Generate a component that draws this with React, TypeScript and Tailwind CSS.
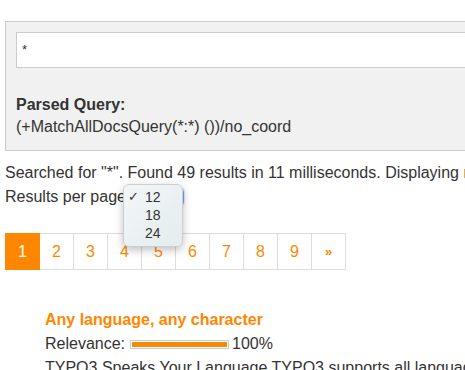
import React from 'react';

const pages = ['1', '2', '3', '4', '5', '6', '7', '8', '9', '»'];

export default function App() {
  return (
    <div className="w-[465px] h-[370px] overflow-hidden bg-white text-[#333] text-[16px] font-['Helvetica_Neue','Liberation_Sans',Arial,sans-serif]">
      <div className="pl-[5px] pt-[21px]">
        {/* search panel */}
        <div className="w-[700px] h-[130px] border border-[#ccc] bg-[#f1f1f1] pl-[10px] pt-[10px]">
          <div className="h-[36px] border border-[#ccc] bg-white pl-[5px] flex items-center text-[13px]">*</div>
          <div className="mt-[26px] font-bold leading-[22px]">Parsed Query:</div>
          <div className="leading-[22px]">(+MatchAllDocsQuery(*:*) ())/no_coord</div>
        </div>

        <div className="mt-[10px] leading-[24px] whitespace-nowrap">
          Searched for "*". Found 49 results in 11 milliseconds. Displaying results 1 to 12.
        </div>
        <div className="relative flex items-center leading-[24px]">
          <span>Results per page</span>
          <div className="ml-[4px] h-[18px] w-[54px] rounded-[4px] border border-[#6aa7e8] shadow-[0_0_2px_#8cbcf0]" />
          {/* open dropdown */}
          <div className="absolute left-[118px] top-[-1px] w-[60px] h-[63px] rounded-[6px] border border-[#c9cfd2] bg-gradient-to-br from-[#f3f6f7] to-[#e4ecee] shadow-[0_3px_8px_rgba(0,0,0,0.25)] pt-[3px] text-[14px] leading-[18px]">
            <div className="flex">
              <span className="w-[21px] pl-[4px] text-[13px]">✓</span>
              <span>12</span>
            </div>
            <div className="flex">
              <span className="w-[21px]" />
              <span>18</span>
            </div>
            <div className="flex">
              <span className="w-[21px]" />
              <span>24</span>
            </div>
          </div>
        </div>

        {/* pagination */}
        <div className="mt-[24px] flex">
          {pages.map((p, i) => (
            <div
              key={p}
              className={
                i === 0
                  ? 'w-[35px] h-[37px] flex items-center justify-center bg-[#ff8700] text-white border border-[#ff8700]'
                  : 'w-[34px] h-[37px] flex items-center justify-center text-[#ff8700] border border-l-0 border-[#ddd]' +
                    (p === '»' ? ' text-[13px] font-bold' : '')
              }
            >
              {p}
            </div>
          ))}
        </div>

        {/* result */}
        <div className="mt-[38px] pl-[40px]">
          <div className="font-bold text-[#ff8700] leading-[24px]">Any language, any character</div>
          <div className="flex items-center leading-[24px]">
            <span>Relevance:</span>
            <div className="ml-[5px] w-[99px] h-[9px] border border-[#ccc] p-[1px] flex">
              <div className="w-full h-full bg-[#f58a07]" />
            </div>
            <span className="ml-[3px]">100%</span>
          </div>
          <div className="leading-[24px] whitespace-nowrap">
            TYPO3 Speaks Your Language TYPO3 supports all languages and character sets
          </div>
        </div>
      </div>
    </div>
  );
}
